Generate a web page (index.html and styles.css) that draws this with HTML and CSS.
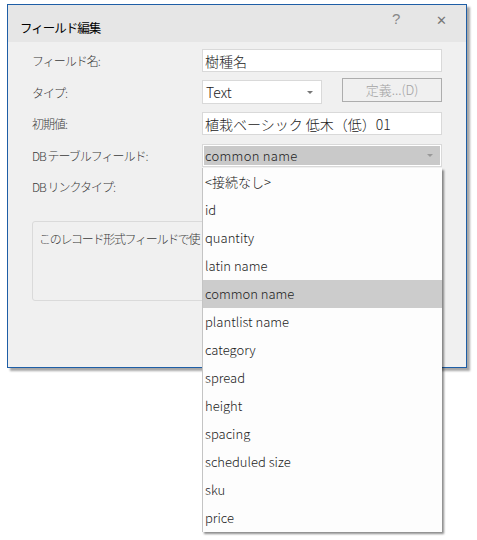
FILE: index.html
```html
<!DOCTYPE html>
<html lang="ja">
<head>
<meta charset="utf-8">
<link rel="stylesheet" href="styles.css">
</head>
<body>
<div class="page">
  <div class="window">
    <div class="titlebar">
      <span class="title">フィールド編集</span>
      <span class="tbtn help">?</span>
      <span class="tbtn close">✕</span>
    </div>
    <div class="content">
      <div class="row">
        <span class="label">フィールド名:</span>
        <div class="input wide">樹種名</div>
      </div>
      <div class="row">
        <span class="label">タイプ:</span>
        <div class="select short">Text<span class="arrow"></span></div>
        <div class="button">定義...(D)</div>
      </div>
      <div class="row">
        <span class="label">初期値:</span>
        <div class="input wide">植栽ベーシック 低木（低）01</div>
      </div>
      <div class="row">
        <span class="label">DB テーブルフィールド:</span>
        <div class="select wide active">common name<span class="arrow"></span></div>
      </div>
      <div class="row">
        <span class="label">DB リンクタイプ:</span>
      </div>
      <div class="group"><span class="gtext">このレコード形式フィールドで使</span></div>
    </div>
  </div>
  <ul class="dropdown">
    <li>&lt;接続なし&gt;</li>
    <li>id</li>
    <li>quantity</li>
    <li>latin name</li>
    <li class="sel">common name</li>
    <li>plantlist name</li>
    <li>category</li>
    <li>spread</li>
    <li>height</li>
    <li>spacing</li>
    <li>scheduled size</li>
    <li>sku</li>
    <li>price</li>
  </ul>
</div>
</body>
</html>
```
FILE: styles.css
```css
html, body {
  margin: 0;
  padding: 0;
  background: #ffffff;
}
body {
  font-family: "Noto Sans CJK JP", "Noto Sans", sans-serif;
  font-size: 12px;
  font-weight: 300;
  color: #333;
}
.page {
  position: relative;
  width: 477px;
  height: 540px;
  overflow: hidden;
  padding-top: 4px;
  box-sizing: border-box;
}
.window {
  margin-left: 7px;
  width: 458px;
  height: 362px;
  border: 1px solid #1e5ea6;
  background: #f0f0f0;
  box-shadow: 3px 3px 2px rgba(0,0,0,0.35);
}
.titlebar {
  height: 37px;
  background: #e6e6e6;
  display: flex;
  align-items: center;
  position: relative;
}
.title {
  margin-left: 12px;
  margin-top: 8px;
  font-size: 12.5px;
  font-weight: 400;
  letter-spacing: -1px;
  color: #000;
}
.tbtn {
  position: absolute;
  top: 5px;
  font-size: 14px;
  color: #777;
}
.help { left: 384px; font-family: "Liberation Sans", sans-serif; font-size: 15px; color: #888; }
.close { left: 428px; font-size: 13px; }
.content {
  padding: 3px 0 0 24px;
}
.row {
  height: 31.5px;
  display: flex;
  align-items: center;
}
.label {
  width: 170px;
  flex: none;
  font-size: 12px;
  letter-spacing: -1px;
  color: #3a3a3a;
}
.input, .select {
  box-sizing: border-box;
  height: 23px;
  border: 1px solid #d9d9d9;
  background: #fff;
  display: flex;
  align-items: center;
  padding-left: 2px;
  font-size: 14px;
  color: #222;
  position: relative;
}
.wide { width: 240px; }
.short { width: 120px; height: 24px; padding-left: 3px; }
.select .arrow {
  position: absolute;
  right: 8px;
  top: 50%;
  margin-top: -1px;
  border-left: 3px solid transparent;
  border-right: 3px solid transparent;
  border-top: 3px solid #777;
}
.select.active {
  background: #c9c9c9;
  box-shadow: inset 0 0 0 1px #fff;
  font-size: 13px;
  letter-spacing: 0.3px;
  color: #222;
}
.select.active .arrow { border-top-color: #999; }
.button {
  box-sizing: border-box;
  width: 100px;
  height: 24px;
  margin-left: 20px;
  margin-top: -5px;
  border: 1px solid #adadad;
  background: #f0f0f0;
  color: #a3a3a3;
  display: flex;
  align-items: center;
  justify-content: center;
  font-size: 13px;
}
.group {
  margin-top: 18px;
  width: 400px;
  height: 80px;
  box-sizing: border-box;
  border: 1px solid #dadada;
  border-radius: 3px;
  padding: 8px 0 0 6px;
}
.gtext {
  display: inline-block;
  white-space: nowrap;
  font-size: 12px;
  letter-spacing: -1.3px;
  color: #3a3a3a;
}
.dropdown {
  position: absolute;
  left: 202px;
  top: 168px;
  width: 240px;
  margin: 0;
  padding: 0;
  list-style: none;
  background: #fdfdfd;
  border-left: 1px solid #c4c4c4;
  box-sizing: border-box;
  box-shadow: 2px 2px 2px rgba(0,0,0,0.45);
}
.dropdown li {
  height: 28px;
  line-height: 28px;
  padding-left: 2px;
  font-size: 13px;
  color: #222;
  white-space: nowrap;
}
.dropdown li.sel {
  background: #cccccc;
}
```
